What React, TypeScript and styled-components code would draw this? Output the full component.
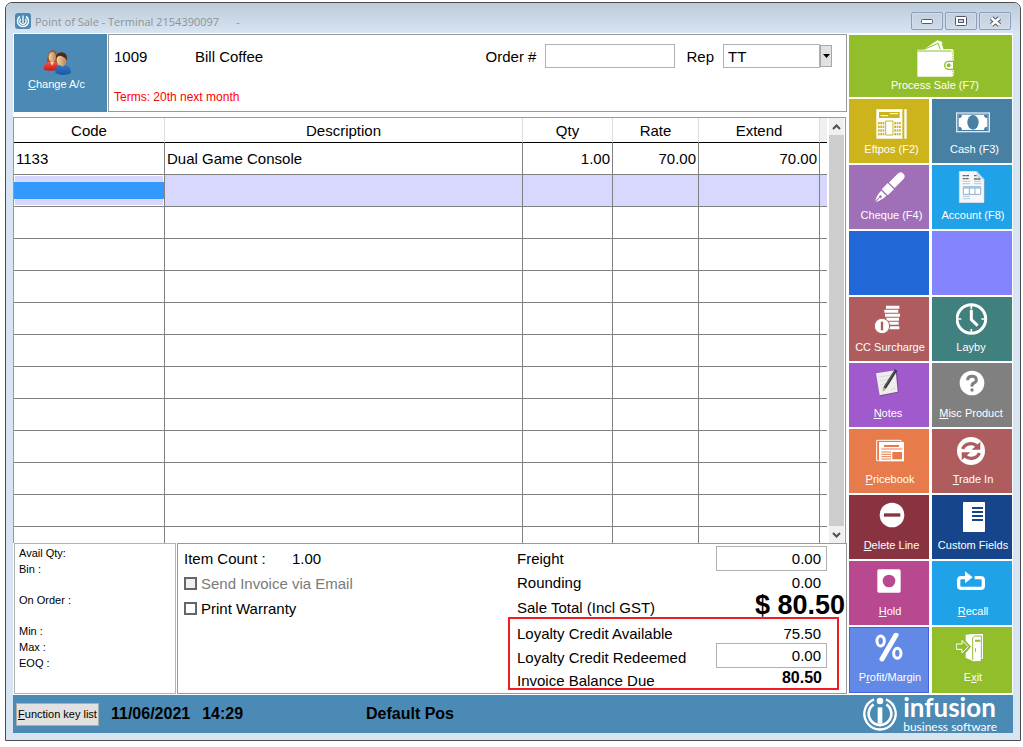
import React from "react";
import styled, { createGlobalStyle, css } from "styled-components";

const GlobalStyle = createGlobalStyle`
  *, *::before, *::after { box-sizing: border-box; }
  body {
    margin: 0;
    background: #fff;
    color: #000;
    font-family: "Liberation Sans", Arial, sans-serif;
    font-size: 15px;
  }
  button, input, select { font: inherit; color: inherit; margin: 0; }
`;

/* ---------- window frame ---------- */

const Window = styled.div`
  margin: 2px 2px 6px 5px;
  min-width: 900px;
  padding: 0 7px 7px;
  border: 1px solid #4b4b50;
  border-radius: 7px 7px 0 0;
  background: #d7e4f1;
  overflow: hidden;
`;

const TitleBar = styled.header`
  display: flex;
  align-items: center;
  height: 30px;
  margin: 0 -7px;
  padding: 0 9px;
  background: linear-gradient(#bdcbd9, #d7e4f1);
  color: #8f9396;
  font-family: "Open Sans", "Noto Sans", sans-serif;
  font-size: 11px;
`;

const AppIcon = styled.svg`
  width: 16px;
  height: 16px;
  margin: 6px 4px 0 0;
`;

const Title = styled.h1`
  flex: 1;
  margin: 6px 0 0;
  font-size: 11px;
  font-weight: 400;
  white-space: pre;
`;

const Caption = styled.div`
  display: flex;
  gap: 2px;
  margin-top: 6px;
`;

const CaptionButton = styled.button`
  display: flex;
  align-items: center;
  justify-content: center;
  width: 32px;
  height: 18px;
  padding: 0;
  border: 1px solid #8e9db8;
  border-radius: 2px;
  background: linear-gradient(#c3d0de, #cfdbe8);
  box-shadow: inset 0 0 0 1px #d3deea;
`;

const Body = styled.div`
  display: flex;
  background: #fff;
`;

const Main = styled.main`
  display: flex;
  flex: 1;
  flex-direction: column;
  min-width: 0;
  padding: 1px 0;
`;

/* ---------- customer header ---------- */

const CustomerRow = styled.section`
  display: flex;
  gap: 1px;
  padding-left: 1px;
  margin-bottom: 5px;
`;

const ChangeButton = styled.button`
  display: flex;
  flex-direction: column;
  align-items: center;
  width: 93px;
  padding: 15px 8px 0 0;
  border: 0;
  background: #4a8ab5;
  color: #fff;
  font-size: 11px;
  line-height: 14px;
`;

const Customer = styled.div`
  flex: 1;
  height: 78px;
  padding: 9px 14px 0 5px;
  border: 1px solid #999;
`;

const CustomerLine = styled.div`
  display: flex;
  align-items: center;
  height: 24px;
`;

const AccountCode = styled.span`
  width: 81px;
`;

const AccountName = styled.span`
  flex: 1;
`;

const FieldLabel = styled.label`
  margin: 0 9px 0 11px;
`;

const OrderInput = styled.input`
  width: 130px;
  height: 24px;
  padding: 0 4px;
  border: 1px solid #b0b0b0;
  background: #fff;
`;

const RepSelect = styled.select`
  appearance: none;
  width: 97px;
  height: 24px;
  padding: 0 4px;
  border: 1px solid #b0b0b0;
  border-radius: 0;
  background: #fff;
`;

const DropMark = styled.span`
  display: flex;
  align-items: center;
  justify-content: center;
  width: 12px;
  height: 22px;
  border: 1px solid #a8a8a8;
  background: #e1e1e1;
`;

const Terms = styled.p`
  margin: 21px 0 0;
  color: #ff0000;
  font-size: 12px;
  line-height: 16px;
`;

/* ---------- sale lines ---------- */

const LinesPanel = styled.section`
  display: flex;
  flex: 1 0 auto;
  height: 0;
  min-height: 200px;
  margin-right: 1px;
  border: solid #999;
  border-width: 1px 1px 0 1px;
  overflow: hidden;
`;

const TableClip = styled.div`
  flex: 1;
  overflow: hidden;
`;

const Lines = styled.table`
  width: 100%;
  table-layout: fixed;
  border-spacing: 0;
`;

const Col = styled.col<{ $w?: number }>`
  ${(p) => p.$w && `width: ${p.$w}px;`}
`;

const Head = styled.th<{ $blank?: boolean }>`
  height: 25px;
  padding: 0;
  border-right: ${(p) => (p.$blank ? "0" : "1px solid #dedede")};
  border-bottom: 1px solid #000;
  background: ${(p) => (p.$blank ? "#f0f0f0" : "#fff")};
  font-weight: 400;
`;

const Cell = styled.td<{ $num?: boolean; $last?: boolean }>`
  height: 32px;
  padding: 0 2px;
  border-right: ${(p) => (p.$last ? "0" : "1px solid #808080")};
  border-bottom: 1px solid #808080;
  text-align: ${(p) => (p.$num ? "right" : "left")};
`;

const Row = styled.tr<{ $active?: boolean }>`
  ${(p) =>
    p.$active &&
    css`
      background: #d8d8ff;
    `}
`;

const EditCell = styled(Cell)`
  padding: 0;
  box-shadow: inset 0 0 0 1px #fff;
`;

const CodeInput = styled.input`
  display: block;
  width: 100%;
  height: 17px;
  padding: 0 2px;
  border: 0;
  background: #3399ff;
  color: #fff;
`;

const Scroll = styled.div`
  display: flex;
  flex-direction: column;
  width: 18px;
  padding: 0 1px;
  border-left: 1px solid #fff;
  background: #fff;
`;

const ScrollButton = styled.button`
  display: flex;
  align-items: center;
  justify-content: center;
  height: 17px;
  padding: 0;
  border: 0;
  background: #f0f0f0;
`;

const Thumb = styled.div`
  flex: 1;
  background: #cdcdcd;
`;

/* ---------- lower panels ---------- */

const Lower = styled.section`
  display: flex;
  gap: 1px;
  padding-left: 1px;
  height: 151px;
`;

const Stock = styled.div`
  display: flex;
  flex-direction: column;
  gap: 15px;
  width: 162px;
  padding: 1px 4px;
  border: 1px solid #b4b4b4;
  font-size: 11px;
  line-height: 16px;
`;

const StockGroup = styled.div`
  display: flex;
  flex-direction: column;
`;

const Summary = styled.div`
  display: flex;
  flex: 1;
  padding: 2px 0 0 6px;
  border: 1px solid #999;
`;

const Options = styled.div`
  flex: 1;
`;

const OptionRow = styled.label<{ $off?: boolean }>`
  display: flex;
  align-items: center;
  height: 25px;
  color: ${(p) => (p.$off ? "#7a7a7a" : "#000")};
`;

const ItemCount = styled.span`
  width: 108px;
`;

const Tick = styled.input`
  appearance: none;
  width: 13px;
  height: 13px;
  margin-right: 4px;
  border: 2px solid #666;
  background: #fff;
  &:disabled { background: #f0f0f0; }
`;

const Totals = styled.div`
  width: 338px;
`;

const TotalRow = styled.div<{ $h: number; $inset?: boolean }>`
  display: flex;
  align-items: center;
  justify-content: space-between;
  height: ${(p) => p.$h}px;
  padding: ${(p) => (p.$inset ? "0 10px 0 7px" : "0 19px 0 9px")};
`;

const TotalLabel = styled.label<{ $low?: boolean }>`
  padding-top: ${(p) => (p.$low ? "4px" : "0")};
`;

const Amount = styled.span<{ $bold?: boolean; $low?: boolean }>`
  padding: ${(p) => (p.$low ? "4px" : "0")} 6px 0 0;
  ${(p) => p.$bold && "font-size: 16px; font-weight: 700; padding-right: 5px;"}
`;

const GrandTotal = styled.strong`
  margin-right: -18px;
  font-size: 27px;
  line-height: 23px;
`;

const AmountInput = styled.input`
  width: 111px;
  height: 25px;
  padding: 0 5px;
  border: 1px solid #b0b0b0;
  background: #fff;
  text-align: right;
`;

const Loyalty = styled.div`
  margin-right: 7px;
  border: 2px solid #ee1c24;
`;

/* ---------- action tiles ---------- */

const Tiles = styled.nav`
  display: grid;
  grid-template-columns: 80px 80px;
  grid-template-rows: 62px repeat(8, 64px) 66px;
  gap: 2px 3px;
  padding: 2px 1px 2px 2px;
`;

type Lean = "left" | "right";

const Tile = styled.button<{ $bg: string; $lean?: Lean; $wide?: boolean; $focus?: boolean }>`
  display: flex;
  flex-direction: column;
  align-items: center;
  padding: ${(p) => (p.$wide ? "5px 0 0 9px" : "6px 0 0 2px")};
  border: 0;
  background: ${(p) => p.$bg};
  box-shadow: ${(p) => (p.$focus ? "inset 0 0 0 1px #3f63e0" : "none")};
  color: #fff;
  font-size: 11px;
  line-height: 14px;
  white-space: nowrap;
  ${(p) => p.$wide && "grid-column: 1 / -1;"}
  & > span {
    padding-left: ${(p) => (p.$lean === "right" ? "3px" : "0")};
    padding-right: ${(p) => (p.$lean === "left" ? "4px" : "0")};
  }
`;

const TileIcon = styled.svg<{ $big?: boolean }>`
  flex: none;
  width: ${(p) => (p.$big ? 38 : 34)}px;
  height: ${(p) => (p.$big ? 38 : 34)}px;
  margin-bottom: ${(p) => (p.$big ? 0 : 3)}px;
`;

/* ---------- footer ---------- */

const Footer = styled.footer`
  display: grid;
  grid-template-columns: 350px 1fr auto;
  align-items: center;
  height: 38px;
  padding: 0 16px 0 3px;
  background: #4a8ab5;
  font-size: 16px;
  font-weight: 700;
`;

const FooterLeft = styled.div`
  display: flex;
  align-items: center;
  gap: 12px;
`;

const KeyListButton = styled.button`
  width: 83px;
  height: 23px;
  padding: 0;
  border: 1px solid #adadad;
  background: #e1e1e1;
  font-size: 11px;
  font-weight: 400;
  white-space: nowrap;
`;

const Brand = styled.div`
  display: flex;
  align-items: center;
  gap: 6px;
  color: #fff;
  font-family: Lato, sans-serif;
`;

const BrandText = styled.div`
  display: flex;
  flex-direction: column;
`;

const BrandName = styled.span`
  font-size: 26px;
  line-height: 25px;
`;

const BrandSub = styled.span`
  font-size: 12px;
  font-weight: 400;
  line-height: 13px;
`;

const BrandMark: React.FC<{ size: number }> = ({ size }) => (
  <svg width={size} height={size} viewBox="0 0 102 102" fill="none" stroke="#fff">
    <path d="M33 7A47 47 0 1 0 69 7" strokeWidth="7" />
    <path d="M32 22A34 34 0 1 0 70 22" strokeWidth="8" />
    <path d="M51 31V80" strokeWidth="14" />
    <circle cx="51" cy="12" r="10" fill="#fff" stroke="none" />
  </svg>
);

/* ---------- icons ---------- */

const Wallet = () => (
  <TileIcon $big viewBox="0 0 114 114">
    <path fill="#fff" d="M4 29H22L64 1 78 5 84 27H108Q113 28 113 34V66H100Q85 68 85 76T100 88H113V104Q112 110 106 110H4Z" />
    <path d="M24 28L66 10 73 28M78 10L84 28M4 33H106" fill="none" stroke="#92be2b" strokeWidth="3" />
    <path d="M113 64H98A12 12 0 0 0 98 88H113Z" fill="#fff" stroke="#92be2b" strokeWidth="4" />
    <circle cx="98" cy="76" r="6" fill="#92be2b" />
    <path d="M110 34V62M110 92V106" stroke="#92be2b" strokeWidth="2" strokeDasharray="4 3" />
  </TileIcon>
);

const keyDots = (x0: number) =>
  [0, 1, 2].flatMap((c) =>
    [0, 1, 2, 3].map((r) => <rect key={`${x0}-${c}-${r}`} x={x0 + c * 7} y={51 + r * 11} width="5" height="7" fill="#cdb41c" />)
  );

const Eftpos = () => (
  <TileIcon viewBox="0 0 102 102">
    <path d="M14 16H102V106H14Z" fill="#a8941a" opacity=".45" />
    <path d="M10 13H101V101H10Z" fill="#fff" />
    <path d="M18 21H80V39H18Z" fill="#cdb41c" />
    <path d="M23 32H45M50 26H75" stroke="#fff" strokeWidth="3" />
    <path d="M88 13H94V101H88Z" fill="#cdb41c" />
    {keyDots(15)}
    {keyDots(64)}
    <path d="M38 48H60V90H38Z" fill="#fff" stroke="#cdb41c" strokeWidth="3" />
  </TileIcon>
);

const Cash = () => (
  <TileIcon viewBox="0 0 102 102">
    <rect x="2" y="24" width="98" height="56" fill="none" stroke="#dbe9f2" strokeWidth="4" />
    <rect x="8" y="29" width="86" height="46" fill="#fff" />
    <ellipse cx="51" cy="52" rx="17" ry="22" fill="#4880a4" />
    <path d="M8 29H18A10 10 0 0 1 8 39ZM94 29H84A10 10 0 0 0 94 39ZM8 75V65A10 10 0 0 1 18 75ZM94 75V65A10 10 0 0 0 84 75Z" fill="#4880a4" />
  </TileIcon>
);

const Pen = () => (
  <TileIcon viewBox="0 0 102 102">
    <g transform="translate(50 49) rotate(45)" fill="#fff">
      <path d="M-12 -9V-45Q-12 -58 0 -58T12 -45V-9Z" />
      <path d="M-13 -5H13V21H-13Z" />
      <path d="M-11 25H11Q12 40 2 61L1 43A4 4 0 1 0 -1 43L-2 61Q-12 40 -11 25Z" />
    </g>
  </TileIcon>
);

const Account = () => (
  <TileIcon viewBox="0 0 102 102">
    <path d="M13 3H64L87 27V98H13Z" fill="#3f7fa8" opacity=".6" />
    <path d="M10 1H62L84 25V95H10Z" fill="#f4f8fb" stroke="#d3dde5" strokeWidth="2" />
    <path d="M62 1L66 21 84 25Z" fill="#cfe0ee" stroke="#9db7ca" />
    <path d="M20 14H40M20 23H38M54 14H62M54 24H74" stroke="#666" strokeWidth="4" strokeDasharray="9 1" />
    <path d="M20 31H42M54 31H76M20 38H42M54 38H76M20 76H42M20 83H42" stroke="#b4cade" strokeWidth="3" />
    <path d="M22 47H74V70H22ZM40 47V70M57 47V70" fill="#fff" stroke="#8fb0ca" strokeWidth="3" />
    <path d="M22 46H74V53H22Z" fill="#a9c4da" />
  </TileIcon>
);

const Coins = () => (
  <TileIcon viewBox="0 0 102 102">
    <path d="M39 13H79M34 25H76M36 37H81M40 49H78M38 61H77M44 74H79" stroke="#fff" strokeWidth="9" />
    <circle cx="27" cy="69" r="23" fill="#fff" stroke="#ae5c5e" strokeWidth="3" />
    <path d="M27 56V82" stroke="#ae5c5e" strokeWidth="7" />
  </TileIcon>
);

const Clock = () => (
  <TileIcon viewBox="0 0 102 102">
    <circle cx="46" cy="48" r="43" fill="none" stroke="#fff" strokeWidth="9" />
    <path d="M46 8V18M46 78V88M6 48H16M76 48H86" stroke="#fff" strokeWidth="5" />
    <path d="M46 20V50L65 68" fill="none" stroke="#fff" strokeWidth="9" />
  </TileIcon>
);

const Notes = () => (
  <TileIcon viewBox="0 0 102 102">
    <path d="M12 16L72 6 77 70 22 82Z" fill="#5b3a72" opacity=".6" />
    <path d="M9 13L68 4 74 68 20 79Z" fill="#eee" />
    <path d="M18 24L62 17M20 35L60 28M22 47L50 42M24 58L40 55M52 62L68 58" stroke="#dadada" strokeWidth="3" />
    <path d="M69 3L35 57" stroke="#333" strokeWidth="9" />
    <path d="M66 5L35 54" stroke="#888" strokeWidth="2" />
    <path d="M39 60L31 55 29 68Z" fill="#c9a34c" />
  </TileIcon>
);

const Help = () => (
  <TileIcon viewBox="0 0 102 102">
    <circle cx="48" cy="42" r="37" fill="#fff" />
    <path d="M35 34Q35 22 48 22T61 33Q61 39 54 42T48 53" fill="none" stroke="#808080" strokeWidth="9" />
    <circle cx="48" cy="63" r="5" fill="#808080" />
  </TileIcon>
);

const Pricebook = () => (
  <TileIcon viewBox="0 0 102 102">
    <path d="M17 77H11V16H84V20" fill="none" stroke="#fff" strokeWidth="3" />
    <rect x="18" y="21" width="75" height="58" fill="#fff" />
    <path d="M33 33H78" stroke="#e87b4c" strokeWidth="6" />
    <path d="M25 42H88M25 51H54M25 58H54M25 65H54M25 72H54" stroke="#e87b4c" strokeWidth="3" />
    <rect x="58" y="51" width="29" height="22" fill="#e87b4c" />
  </TileIcon>
);

const TradeIn = () => (
  <TileIcon viewBox="0 0 102 102">
    <circle cx="45" cy="48" r="42" fill="#fff" />
    <path d="M20 42A26 24 0 0 1 63 33M70 54A26 24 0 0 1 27 63" fill="none" stroke="#ae5c5e" strokeWidth="10" />
    <path d="M73 20V44H47ZM17 76V52H43Z" fill="#ae5c5e" />
  </TileIcon>
);

const DeleteLine = () => (
  <TileIcon viewBox="0 0 102 102">
    <circle cx="57" cy="42" r="37" fill="#fff" />
    <path d="M33 42H82" stroke="#8a3340" strokeWidth="10" />
  </TileIcon>
);

const CustomFields = () => (
  <TileIcon viewBox="0 0 102 102">
    <rect x="21" y="3" width="66" height="90" rx="2" fill="#fff" />
    <path d="M48 21H81M48 33H81M48 45H81M48 57H81" stroke="#17458b" strokeWidth="6" />
  </TileIcon>
);

const Hold = () => (
  <TileIcon viewBox="0 0 102 102">
    <rect x="13" y="7" width="70" height="70" rx="5" fill="#fff" />
    <circle cx="48" cy="42" r="19" fill="#b84890" />
  </TileIcon>
);

const Recall = () => (
  <TileIcon viewBox="0 0 102 102">
    <path d="M56 32H74Q82 32 82 40V56Q82 64 74 64H16Q8 64 8 56V40Q8 32 16 32H30" fill="none" stroke="#fff" strokeWidth="10" />
    <path d="M27 13L50 31 27 49Z" fill="#fff" />
  </TileIcon>
);

const Percent = () => (
  <TileIcon viewBox="0 0 102 102" fill="none" stroke="#fff">
    <ellipse cx="23" cy="24" rx="11" ry="15" strokeWidth="9" />
    <ellipse cx="73" cy="61" rx="11" ry="15" strokeWidth="9" />
    <path d="M69 6L27 78" strokeWidth="15" strokeLinecap="round" />
  </TileIcon>
);

const Exit = () => (
  <TileIcon viewBox="0 0 102 102">
    <path d="M29 5L52 3H81V77H74V84L52 85 29 74V60L45 41 29 24Z" fill="#fff" />
    <path d="M1 33H18V22L37 41 18 60V49H1Z" fill="#92be2b" stroke="#fff" strokeWidth="3" />
    <path d="M24 20L43 41 24 63" fill="none" stroke="#92be2b" strokeWidth="3" />
    <path d="M50 80V14L56 9H76V76" fill="none" stroke="#92be2b" strokeWidth="3" />
    <path d="M57 20H73V26H57ZM57 46H60V56H57Z" fill="#92be2b" />
  </TileIcon>
);

const People = () => (
  <svg width="30" height="28" viewBox="0 0 90 84">
    <defs>
      <linearGradient id="red" x2="0" y2="1"><stop stopColor="#f4564a" /><stop offset="1" stopColor="#c81a1a" /></linearGradient>
      <linearGradient id="blue" x2="0" y2="1"><stop stopColor="#2f78c4" /><stop offset="1" stopColor="#1b57a6" /></linearGradient>
      <linearGradient id="skin" x2="1" y2="0"><stop stopColor="#f6d3ab" /><stop offset="1" stopColor="#b98352" /></linearGradient>
    </defs>
    <path d="M14 40Q16 4 34 3 50 6 50 42Z" fill="#9a5a24" />
    <ellipse cx="31" cy="24" rx="11" ry="15" fill="url(#skin)" />
    <path d="M5 62Q4 38 24 38H38Q48 40 48 62 26 68 5 62Z" fill="url(#red)" />
    <path d="M24 38L30 50 37 38Z" fill="#f6d3ab" />
    <ellipse cx="59" cy="32" rx="15" ry="19" fill="url(#skin)" />
    <path d="M42 30Q40 10 60 10 78 12 75 36 70 22 52 20 44 22 42 30Z" fill="#4a2c1c" />
    <path d="M40 72Q39 50 54 48L62 56 70 48Q87 52 87 72 64 84 40 72Z" fill="url(#blue)" />
  </svg>
);

const Chevron: React.FC<{ up?: boolean }> = ({ up }) => (
  <svg width="9" height="6" viewBox="0 0 9 6" fill="none" stroke="#505050" strokeWidth="2">
    <path d={up ? "M1 5L4.5 1.5 8 5" : "M1 1L4.5 4.5 8 1"} />
  </svg>
);

/* ---------- data ---------- */

type Action = { label: string; bg: string; mark?: number; lean?: Lean; icon?: React.FC; focus?: boolean };

const actions: Action[] = [
  { label: "Eftpos (F2)", bg: "#cdb41c", icon: Eftpos, lean: "right" },
  { label: "Cash (F3)", bg: "#4880a4", icon: Cash, lean: "right" },
  { label: "Cheque (F4)", bg: "#9f70b7", icon: Pen, lean: "right" },
  { label: "Account (F8)", bg: "#1fa2e8", icon: Account },
  { label: "", bg: "#2268d8" },
  { label: "", bg: "#8484ff" },
  { label: "CC Surcharge", bg: "#ae5c5e", icon: Coins },
  { label: "Layby", bg: "#40807e", icon: Clock, lean: "left" },
  { label: "Notes", bg: "#a05acb", icon: Notes, mark: 0, lean: "left" },
  { label: "Misc Product", bg: "#808080", icon: Help, mark: 0, lean: "left" },
  { label: "Pricebook", bg: "#e87b4c", icon: Pricebook, mark: 0 },
  { label: "Trade In", bg: "#ae5c5e", icon: TradeIn, mark: 0 },
  { label: "Delete Line", bg: "#8a3340", icon: DeleteLine, mark: 0, lean: "right" },
  { label: "Custom Fields", bg: "#17458b", icon: CustomFields },
  { label: "Hold", bg: "#b84890", icon: Hold, mark: 0 },
  { label: "Recall", bg: "#1fa2e8", icon: Recall, mark: 0 },
  { label: "Profit/Margin", bg: "#6389e6", icon: Percent, mark: 1, focus: true },
  { label: "Exit", bg: "#92be2b", icon: Exit, mark: 1 },
];

const Mnemonic: React.FC<{ text: string; at?: number }> = ({ text, at }) =>
  at === undefined ? (
    <span>{text}</span>
  ) : (
    <span>
      {text.slice(0, at)}
      <u>{text[at]}</u>
      {text.slice(at + 1)}
    </span>
  );

const blankRows = Array.from({ length: 11 }, (_, i) => i);

const App: React.FC = () => (
  <>
    <GlobalStyle />
    <Window>
      <TitleBar>
        <AppIcon viewBox="0 0 16 16">
          <rect width="16" height="16" rx="3" fill="#4a8ab5" />
          <path d="M5 3.5A5.5 5.5 0 1 0 11 3.5" fill="none" stroke="#fff" strokeWidth="1.5" />
          <path d="M5.8 6A3.2 3.2 0 1 0 10.2 6M8 2.5V10" fill="none" stroke="#fff" strokeWidth="1.3" />
        </AppIcon>
        <Title>{"Point of Sale - Terminal 2154390097      -"}</Title>
        <Caption>
          <CaptionButton aria-label="Minimize">
            <svg width="12" height="5"><rect x=".5" y=".5" width="11" height="4" rx="1" fill="#fff" stroke="#55586a" /></svg>
          </CaptionButton>
          <CaptionButton aria-label="Maximize">
            <svg width="12" height="10"><rect x=".5" y=".5" width="11" height="9" rx="1" fill="#fff" stroke="#55586a" /><rect x="3.5" y="3.5" width="5" height="3" fill="#c8d4e2" stroke="#55586a" /></svg>
          </CaptionButton>
          <CaptionButton aria-label="Close">
            <svg width="13" height="11" viewBox="0 0 13 11"><path d="M2.5 2L10.5 9M10.5 2L2.5 9" stroke="#55586a" strokeWidth="4.8" /><path d="M2.5 2L10.5 9M10.5 2L2.5 9" stroke="#fff" strokeWidth="2.6" /></svg>
          </CaptionButton>
        </Caption>
      </TitleBar>

      <Body>
        <Main>
          <CustomerRow>
            <ChangeButton>
              <People />
              <Mnemonic text="Change A/c" at={0} />
            </ChangeButton>
            <Customer>
              <CustomerLine>
                <AccountCode>1009</AccountCode>
                <AccountName>Bill Coffee</AccountName>
                <FieldLabel htmlFor="order">Order #</FieldLabel>
                <OrderInput id="order" />
                <FieldLabel htmlFor="rep">Rep</FieldLabel>
                <RepSelect id="rep" defaultValue="TT">
                  <option>TT</option>
                </RepSelect>
                <DropMark>
                  <svg width="7" height="4"><path d="M0 0H7L3.5 4Z" /></svg>
                </DropMark>
              </CustomerLine>
              <Terms>Terms: 20th next month</Terms>
            </Customer>
          </CustomerRow>

          <LinesPanel>
            <TableClip>
              <Lines>
                <colgroup>
                  <Col $w={151} />
                  <Col />
                  <Col $w={90} />
                  <Col $w={86} />
                  <Col $w={121} />
                  <Col $w={7} />
                </colgroup>
                <thead>
                  <tr>
                    <Head>Code</Head>
                    <Head>Description</Head>
                    <Head>Qty</Head>
                    <Head>Rate</Head>
                    <Head>Extend</Head>
                    <Head $blank />
                  </tr>
                </thead>
                <tbody>
                  <Row>
                    <Cell>1133</Cell>
                    <Cell>Dual Game Console</Cell>
                    <Cell $num>1.00</Cell>
                    <Cell $num>70.00</Cell>
                    <Cell $num>70.00</Cell>
                    <Cell $last />
                  </Row>
                  <Row $active>
                    <EditCell><CodeInput aria-label="Code" /></EditCell>
                    <Cell /><Cell /><Cell /><Cell /><Cell $last />
                  </Row>
                  {blankRows.map((i) => (
                    <Row key={i}>
                      <Cell /><Cell /><Cell /><Cell /><Cell /><Cell $last />
                    </Row>
                  ))}
                </tbody>
              </Lines>
            </TableClip>
            <Scroll>
              <ScrollButton aria-label="Scroll up"><Chevron up /></ScrollButton>
              <Thumb />
              <ScrollButton aria-label="Scroll down"><Chevron /></ScrollButton>
            </Scroll>
          </LinesPanel>

          <Lower>
            <Stock>
              <StockGroup><span>Avail Qty:</span><span>Bin :</span></StockGroup>
              <StockGroup><span>On Order :</span></StockGroup>
              <StockGroup><span>Min :</span><span>Max :</span><span>EOQ :</span></StockGroup>
            </Stock>
            <Summary>
              <Options>
                <OptionRow as="div"><ItemCount>Item Count :</ItemCount><span>1.00</span></OptionRow>
                <OptionRow $off><Tick type="checkbox" disabled />Send Invoice via Email</OptionRow>
                <OptionRow><Tick type="checkbox" />Print Warranty</OptionRow>
              </Options>
              <Totals>
                <TotalRow $h={25}>
                  <TotalLabel htmlFor="freight">Freight</TotalLabel>
                  <AmountInput id="freight" defaultValue="0.00" />
                </TotalRow>
                <TotalRow $h={23}>
                  <TotalLabel as="span">Rounding</TotalLabel>
                  <Amount>0.00</Amount>
                </TotalRow>
                <TotalRow $h={23}>
                  <TotalLabel as="span" $low>Sale Total (Incl GST)</TotalLabel>
                  <GrandTotal>$ 80.50</GrandTotal>
                </TotalRow>
                <Loyalty>
                  <TotalRow $h={24} $inset>
                    <TotalLabel as="span" $low>Loyalty Credit Available</TotalLabel>
                    <Amount $low>75.50</Amount>
                  </TotalRow>
                  <TotalRow $h={25} $inset>
                    <TotalLabel htmlFor="redeemed" $low>Loyalty Credit Redeemed</TotalLabel>
                    <AmountInput id="redeemed" defaultValue="0.00" />
                  </TotalRow>
                  <TotalRow $h={20} $inset>
                    <TotalLabel as="span" $low>Invoice Balance Due</TotalLabel>
                    <Amount $bold>80.50</Amount>
                  </TotalRow>
                </Loyalty>
              </Totals>
            </Summary>
          </Lower>
        </Main>

        <Tiles>
          <Tile $bg="#92be2b" $wide>
            <Wallet />
            <span>Process Sale (F7)</span>
          </Tile>
          {actions.map((a, i) => (
            <Tile key={i} $bg={a.bg} $lean={a.lean} $focus={a.focus} aria-label={a.label || "Unassigned"}>
              {a.icon && <a.icon />}
              {a.label && <Mnemonic text={a.label} at={a.mark} />}
            </Tile>
          ))}
        </Tiles>
      </Body>

      <Footer>
        <FooterLeft>
          <KeyListButton><Mnemonic text="Function key list" at={0} /></KeyListButton>
          <time>11/06/2021</time>
          <time>14:29</time>
        </FooterLeft>
        <span>Default Pos</span>
        <Brand>
          <BrandMark size={34} />
          <BrandText>
            <BrandName>infusion</BrandName>
            <BrandSub>business software</BrandSub>
          </BrandText>
        </Brand>
      </Footer>
    </Window>
  </>
);

export default App;
